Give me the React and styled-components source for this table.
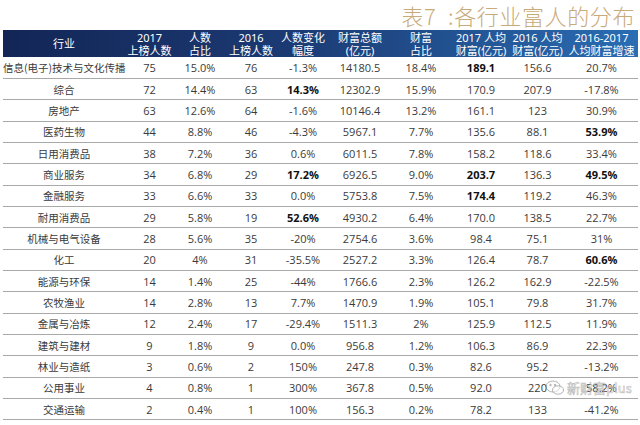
import React from 'react';
import styled, { createGlobalStyle } from 'styled-components';

const GlobalStyle = createGlobalStyle`
  html, body {
    margin: 0;
    padding: 0;
    background: #ffffff;
  }
  body {
    font-family: "Noto Sans", "Noto Sans CJK SC", sans-serif;
  }
`;

const Page = styled.div`
  position: relative;
  width: 640px;
  height: 425px;
  overflow: hidden;
  background: #fff;
`;

const TitleBar = styled.div`
  height: 30px;
  display: flex;
  justify-content: flex-end;
  align-items: center;
  padding-right: 5px;
`;

const Title = styled.h1`
  margin: 0;
  font-family: "Noto Sans CJK SC", sans-serif;
  font-weight: 300;
  font-size: 22px;
  line-height: 24px;
  color: #c9aa7a;
  letter-spacing: 0.6px;
  white-space: pre;
`;

const Table = styled.table`
  margin-left: 3px;
  width: 635px;
  border-collapse: collapse;
  table-layout: fixed;
`;

const HeadRow = styled.tr`
  height: 27px;
  background: linear-gradient(90deg, #132656 0%, #1b3a73 45%, #2a6db3 100%);
`;

const Th = styled.th`
  padding: 0;
  color: #ffffff;
  font-family: "Noto Sans", "Noto Sans CJK SC", sans-serif;
  font-weight: 400;
  font-size: 11px;
  line-height: 13px;
  text-align: center;
  white-space: nowrap;
`;

const HeadLine = styled.div`
  height: 13px;
`;

const Row = styled.tr`
  height: 21.35px;
  border-bottom: 1px solid #a9a9a9;
`;

const Td = styled.td`
  padding: 0;
  text-align: center;
  white-space: nowrap;
  font-size: ${(p) => (p.$name ? '10.5px' : '11px')};
  font-family: ${(p) =>
    p.$name ? '"Noto Sans CJK SC", sans-serif' : '"Open Sans", "Noto Sans", sans-serif'};
  font-weight: ${(p) => (p.$bold ? 700 : 400)};
  color: ${(p) => (p.$bold ? '#111' : '#3a3a3a')};
`;

const Watermark = styled.div`
  position: absolute;
  left: 545px;
  top: 378px;
  display: flex;
  align-items: center;
  gap: 2px;
  font-family: "Noto Sans CJK SC", sans-serif;
  font-size: 13px;
  color: rgba(255, 255, 255, 0.55);
  -webkit-text-stroke: 0.6px rgba(120, 120, 120, 0.5);
  pointer-events: none;
`;

const widths = [122, 49, 52, 50, 54, 60, 62, 58, 55, 73];

const headers = [
  ['行业'],
  ['2017', '上榜人数'],
  ['人数', '占比'],
  ['2016', '上榜人数'],
  ['人数变化', '幅度'],
  ['财富总额', '(亿元)'],
  ['财富', '占比'],
  ['2017 人均', '财富(亿元)'],
  ['2016 人均', '财富(亿元)'],
  ['2016-2017', '人均财富增速'],
];

// '*' prefix = bold cell
const rows = [
  ['信息(电子)技术与文化传播', '75', '15.0%', '76', '-1.3%', '14180.5', '18.4%', '*189.1', '156.6', '20.7%'],
  ['综合', '72', '14.4%', '63', '*14.3%', '12302.9', '15.9%', '170.9', '207.9', '-17.8%'],
  ['房地产', '63', '12.6%', '64', '-1.6%', '10146.4', '13.2%', '161.1', '123', '30.9%'],
  ['医药生物', '44', '8.8%', '46', '-4.3%', '5967.1', '7.7%', '135.6', '88.1', '*53.9%'],
  ['日用消费品', '38', '7.2%', '36', '0.6%', '6011.5', '7.8%', '158.2', '118.6', '33.4%'],
  ['商业服务', '34', '6.8%', '29', '*17.2%', '6926.5', '9.0%', '*203.7', '136.3', '*49.5%'],
  ['金融服务', '33', '6.6%', '33', '0.0%', '5753.8', '7.5%', '*174.4', '119.2', '46.3%'],
  ['耐用消费品', '29', '5.8%', '19', '*52.6%', '4930.2', '6.4%', '170.0', '138.5', '22.7%'],
  ['机械与电气设备', '28', '5.6%', '35', '-20%', '2754.6', '3.6%', '98.4', '75.1', '31%'],
  ['化工', '20', '4%', '31', '-35.5%', '2527.2', '3.3%', '126.4', '78.7', '*60.6%'],
  ['能源与环保', '14', '1.4%', '25', '-44%', '1766.6', '2.3%', '126.2', '162.9', '-22.5%'],
  ['农牧渔业', '14', '2.8%', '13', '7.7%', '1470.9', '1.9%', '105.1', '79.8', '31.7%'],
  ['金属与冶炼', '12', '2.4%', '17', '-29.4%', '1511.3', '2%', '125.9', '112.5', '11.9%'],
  ['建筑与建材', '9', '1.8%', '9', '0.0%', '956.8', '1.2%', '106.3', '86.9', '22.3%'],
  ['林业与造纸', '3', '0.6%', '2', '150%', '247.8', '0.3%', '82.6', '95.2', '-13.2%'],
  ['公用事业', '4', '0.8%', '1', '300%', '367.8', '0.5%', '92.0', '220', '58.2%'],
  ['交通运输', '2', '0.4%', '1', '100%', '156.3', '0.2%', '78.2', '133', '-41.2%'],
];

const ChatIcon = () => (
  <svg width="20" height="16" viewBox="0 0 20 16" fill="none" stroke="rgba(120,120,120,0.55)" strokeWidth="1">
    <ellipse cx="8" cy="6.5" rx="7" ry="5.5" />
    <ellipse cx="13" cy="10" rx="5.5" ry="4.2" fill="rgba(255,255,255,0.5)" />
    <circle cx="5.5" cy="5" r="0.8" />
    <circle cx="10" cy="5" r="0.8" />
  </svg>
);

const App = () => (
  <Page>
    <GlobalStyle />
    <TitleBar>
      <Title>{'表7\u2002:各行业富人的分布'}</Title>
    </TitleBar>
    <Table>
      <colgroup>
        {widths.map((w, i) => (
          <col key={i} style={{ width: w }} />
        ))}
      </colgroup>
      <thead>
        <HeadRow>
          {headers.map((h, i) => (
            <Th key={i}>
              {h.map((line, j) => (
                <HeadLine key={j}>{line}</HeadLine>
              ))}
            </Th>
          ))}
        </HeadRow>
      </thead>
      <tbody>
        {rows.map((r, i) => (
          <Row key={i}>
            {r.map((c, j) => {
              const bold = c.startsWith('*');
              return (
                <Td key={j} $name={j === 0} $bold={bold}>
                  {bold ? c.slice(1) : c}
                </Td>
              );
            })}
          </Row>
        ))}
      </tbody>
    </Table>
    <Watermark>
      <ChatIcon />
      新财富plus
    </Watermark>
  </Page>
);

export default App;
